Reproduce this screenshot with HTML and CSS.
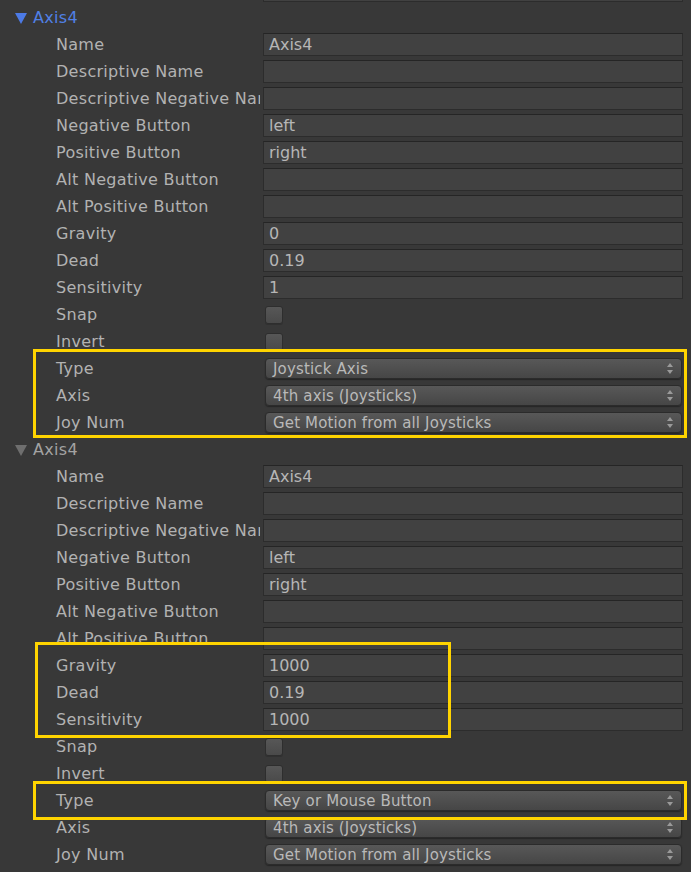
FILE: index.html
```html
<!DOCTYPE html>
<html>
<head>
<meta charset="utf-8">
<link rel="stylesheet" href="styles.css">
</head>
<body>
<div class="inspector">
  <div class="row tail"><span class="label"></span><div class="field"></div></div>

  <div class="header active"><span class="tri"></span><span class="htext">Axis4</span></div>
  <div class="row"><span class="label">Name</span><div class="field">Axis4</div></div>
  <div class="row"><span class="label">Descriptive Name</span><div class="field"></div></div>
  <div class="row"><span class="label">Descriptive Negative Name</span><div class="field"></div></div>
  <div class="row"><span class="label">Negative Button</span><div class="field">left</div></div>
  <div class="row"><span class="label">Positive Button</span><div class="field">right</div></div>
  <div class="row"><span class="label">Alt Negative Button</span><div class="field"></div></div>
  <div class="row"><span class="label">Alt Positive Button</span><div class="field"></div></div>
  <div class="row"><span class="label">Gravity</span><div class="field">0</div></div>
  <div class="row"><span class="label">Dead</span><div class="field">0.19</div></div>
  <div class="row"><span class="label">Sensitivity</span><div class="field">1</div></div>
  <div class="row"><span class="label">Snap</span><div class="check"></div></div>
  <div class="row"><span class="label">Invert</span><div class="check"></div></div>
  <div class="row"><span class="label">Type</span><div class="drop"><span>Joystick Axis</span><svg class="arr" width="6" height="11" viewBox="0 0 6 11"><path d="M3 0 L6 4 L0 4 Z M0 7 L6 7 L3 11 Z" fill="#9a9a9a"/></svg></div></div>
  <div class="row"><span class="label">Axis</span><div class="drop"><span>4th axis (Joysticks)</span><svg class="arr" width="6" height="11" viewBox="0 0 6 11"><path d="M3 0 L6 4 L0 4 Z M0 7 L6 7 L3 11 Z" fill="#9a9a9a"/></svg></div></div>
  <div class="row"><span class="label">Joy Num</span><div class="drop"><span>Get Motion from all Joysticks</span><svg class="arr" width="6" height="11" viewBox="0 0 6 11"><path d="M3 0 L6 4 L0 4 Z M0 7 L6 7 L3 11 Z" fill="#9a9a9a"/></svg></div></div>

  <div class="header"><span class="tri"></span><span class="htext">Axis4</span></div>
  <div class="row"><span class="label">Name</span><div class="field">Axis4</div></div>
  <div class="row"><span class="label">Descriptive Name</span><div class="field"></div></div>
  <div class="row"><span class="label">Descriptive Negative Name</span><div class="field"></div></div>
  <div class="row"><span class="label">Negative Button</span><div class="field">left</div></div>
  <div class="row"><span class="label">Positive Button</span><div class="field">right</div></div>
  <div class="row"><span class="label">Alt Negative Button</span><div class="field"></div></div>
  <div class="row"><span class="label">Alt Positive Button</span><div class="field"></div></div>
  <div class="row"><span class="label">Gravity</span><div class="field">1000</div></div>
  <div class="row"><span class="label">Dead</span><div class="field">0.19</div></div>
  <div class="row"><span class="label">Sensitivity</span><div class="field">1000</div></div>
  <div class="row"><span class="label">Snap</span><div class="check"></div></div>
  <div class="row"><span class="label">Invert</span><div class="check"></div></div>
  <div class="row"><span class="label">Type</span><div class="drop"><span>Key or Mouse Button</span><svg class="arr" width="6" height="11" viewBox="0 0 6 11"><path d="M3 0 L6 4 L0 4 Z M0 7 L6 7 L3 11 Z" fill="#9a9a9a"/></svg></div></div>
  <div class="row"><span class="label">Axis</span><div class="drop"><span>4th axis (Joysticks)</span><svg class="arr" width="6" height="11" viewBox="0 0 6 11"><path d="M3 0 L6 4 L0 4 Z M0 7 L6 7 L3 11 Z" fill="#9a9a9a"/></svg></div></div>
  <div class="row"><span class="label">Joy Num</span><div class="drop"><span>Get Motion from all Joysticks</span><svg class="arr" width="6" height="11" viewBox="0 0 6 11"><path d="M3 0 L6 4 L0 4 Z M0 7 L6 7 L3 11 Z" fill="#9a9a9a"/></svg></div></div>

  <div class="annot a1"></div>
  <div class="annot a2"></div>
  <div class="annot a3"></div>
</div>
</body>
</html>
```

FILE: styles.css
```css
html, body {
  margin: 0;
  padding: 0;
  background: #383838;
  overflow: hidden;
}
.inspector {
  position: relative;
  display: flow-root;
  width: 691px;
  height: 872px;
  font-family: "DejaVu Sans", sans-serif;
  font-size: 16px;
  color: #b2b2b2;
}
.row, .header {
  height: 27px;
  display: flex;
  align-items: center;
}
.tail {
  margin-top: -23px;
}
.label {
  box-sizing: border-box;
  flex: 0 0 260px;
  margin-right: 3px;
  padding-left: 56px;
  white-space: nowrap;
  overflow: hidden;
  letter-spacing: 0.3px;
}
.field {
  box-sizing: border-box;
  width: 420px;
  height: 23px;
  background: #414141;
  border: 1px solid #2c2c2c;
  border-top-color: #252525;
  padding-left: 5px;
  line-height: 21px;
  color: #b6b6b6;
  white-space: nowrap;
  overflow: hidden;
}
.check {
  box-sizing: border-box;
  width: 18px;
  height: 18px;
  margin-left: 2px;
  border-radius: 3px;
  background: linear-gradient(#575757, #4a4a4a);
  border: 1px solid #2e2e2e;
  box-shadow: 0 1px 0 #303030;
}
.drop {
  box-sizing: border-box;
  width: 417px;
  height: 21px;
  margin-left: 2px;
  border-radius: 4px;
  background: linear-gradient(#585858, #464646);
  border: 1px solid #2b2b2b;
  box-shadow: 0 1px 1px #262626;
  display: flex;
  align-items: center;
  justify-content: space-between;
  padding: 0 8px 0 7px;
  font-size: 15px;
  letter-spacing: 0.15px;
  color: #b9b9b9;
  white-space: nowrap;
}
.arr {
  display: block;
}
.header {
  padding-left: 15px;
}
.tri {
  width: 0;
  height: 0;
  border-left: 6px solid transparent;
  border-right: 6px solid transparent;
  border-top: 11px solid #6e6e6e;
  margin-right: 6px;
  margin-top: 1px;
}
.htext {
  color: #a3a3a3;
  letter-spacing: 0.3px;
}
.header.active .tri {
  border-top-color: #4c7ae6;
}
.header.active .htext {
  color: #5080e6;
}
.annot {
  position: absolute;
  box-sizing: border-box;
  border: 3px solid #ffd400;
}
.a1 { left: 33px; top: 349px; width: 654px; height: 89px; }
.a2 { left: 35px; top: 642px; width: 416px; height: 96px; }
.a3 { left: 33px; top: 781px; width: 654px; height: 39px; }
```
